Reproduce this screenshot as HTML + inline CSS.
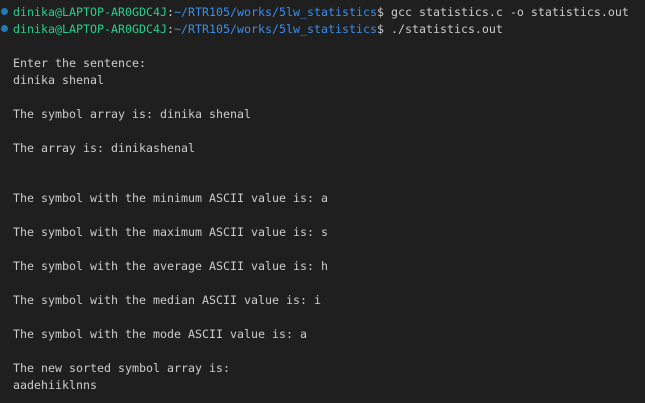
<!DOCTYPE html>
<html><head><style>
html,body{margin:0;padding:0;background:#1f1f1f;width:645px;height:403px;overflow:hidden}
pre{margin:0;position:absolute;left:13px;top:4px;font-family:"DejaVu Sans Mono","Liberation Mono",monospace;font-size:11.63px;line-height:16.95px;color:#cccccc;white-space:pre}
.g{color:#23d18b}.b{color:#3b8eea}
.dot{position:absolute;left:1px;width:7px;height:7px;border-radius:50%;background:#1f7ab5}
</style></head><body>
<div class="dot" style="top:8px"></div>
<div class="dot" style="top:25px"></div>
<pre><span class="g">dinika@LAPTOP-AR0GDC4J</span>:<span class="b">~/RTR105/works/5lw_statistics</span>$ gcc statistics.c -o statistics.out
<span class="g">dinika@LAPTOP-AR0GDC4J</span>:<span class="b">~/RTR105/works/5lw_statistics</span>$ ./statistics.out

Enter the sentence:
dinika shenal

The symbol array is: dinika shenal

The array is: dinikashenal


The symbol with the minimum ASCII value is: a

The symbol with the maximum ASCII value is: s

The symbol with the average ASCII value is: h

The symbol with the median ASCII value is: i

The symbol with the mode ASCII value is: a

The new sorted symbol array is:
aadehiiklnns</pre>
</body></html>
